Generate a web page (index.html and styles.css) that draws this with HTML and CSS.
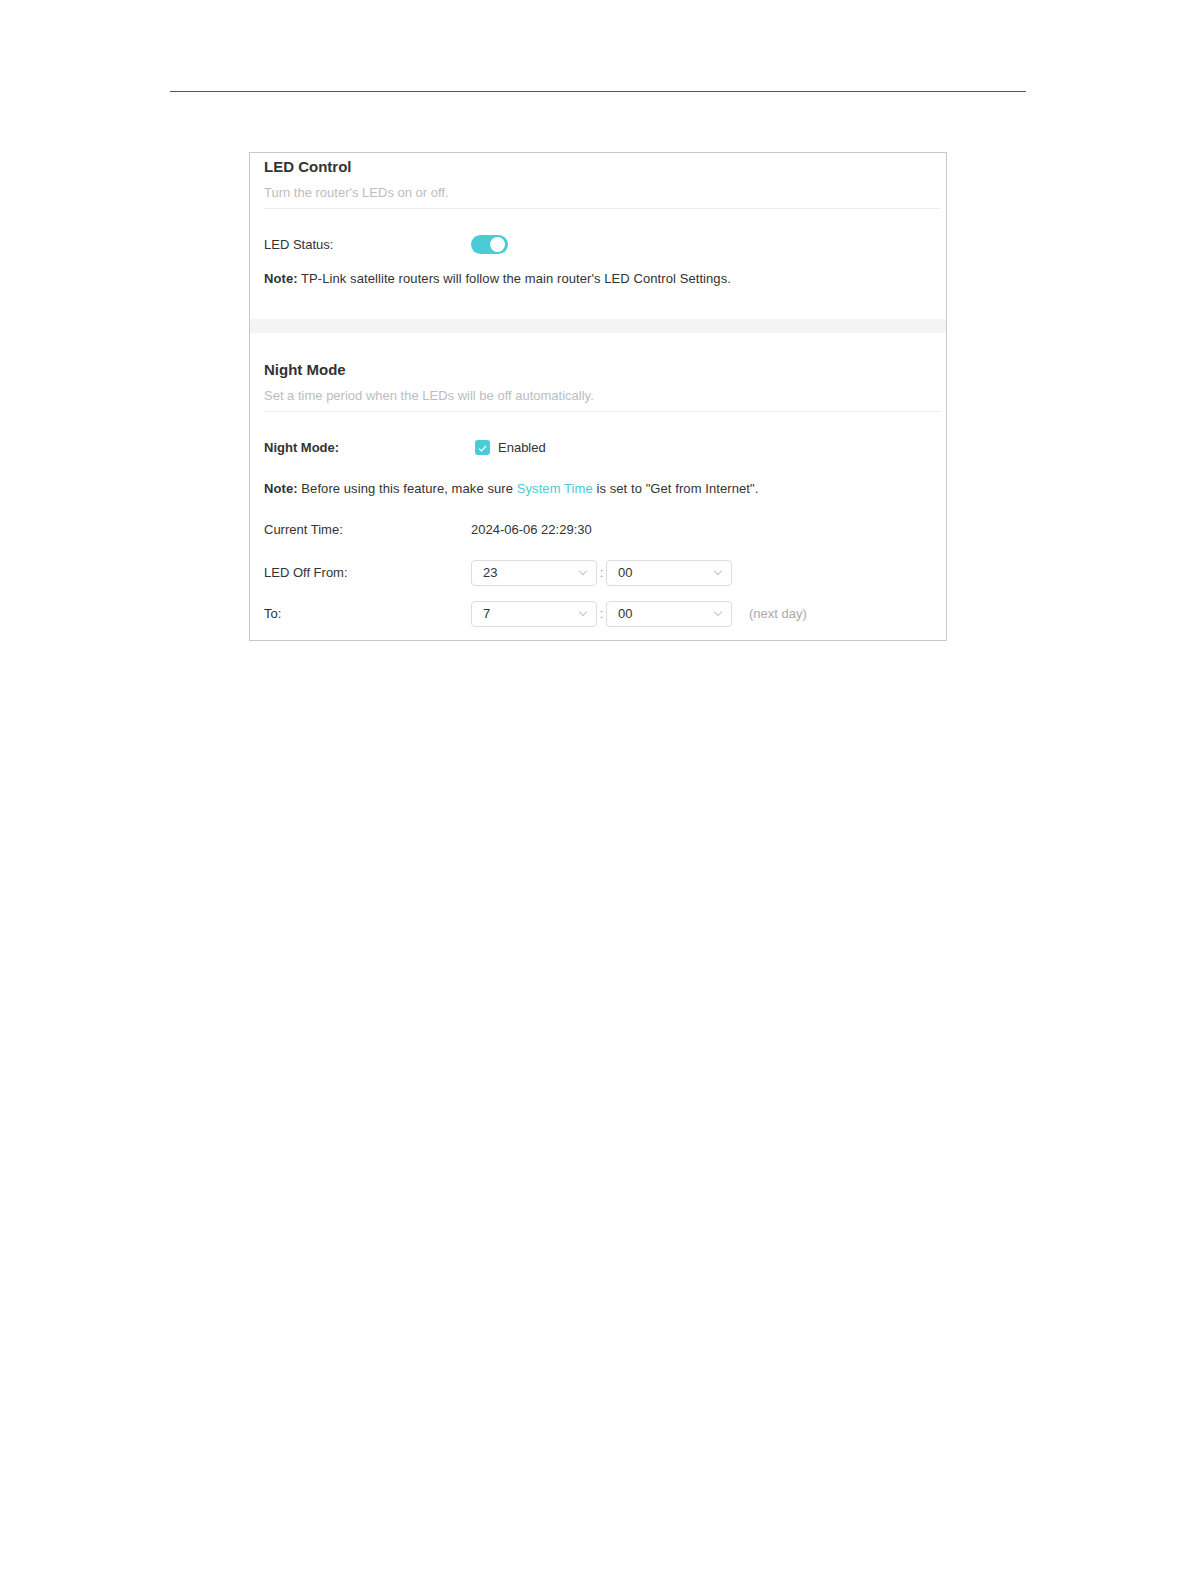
FILE: index.html
```html
<!DOCTYPE html>
<html lang="en">

<head>
    <meta charset="UTF-8">
    <meta name="viewport" content="width=device-width, initial-scale=1.0">
    <title>LED Control</title>

    <link rel="stylesheet" href="styles.css">
</head>

<body>
    <div class="page-rule"></div>

    <div class="panel">
        <!-- LED Control -->
        <div class="section">
            <div class="section-head">
                <h2>LED Control</h2>
                <p>Turn the router's LEDs on or off.</p>
            </div>
            <div class="row short">
                <div class="label">LED Status:</div>
                <div class="value">
                    <span class="toggle on"><span class="knob"></span></span>
                </div>
            </div>
            <div class="row shorter">
                <div class="note"><b>Note:</b> TP-Link satellite routers will follow the main router's LED Control Settings.</div>
            </div>
        </div>

        <div class="band"></div>

        <!-- Night Mode -->
        <div class="section night">
            <div class="section-head">
                <h2>Night Mode</h2>
                <p>Set a time period when the LEDs will be off automatically.</p>
            </div>
            <div class="rows">
                <div class="row">
                    <div class="label bold">Night Mode:</div>
                    <div class="value">
                        <label class="check">
                            <span class="box">
                                <svg width="9" height="7" viewBox="0 0 9 7">
                                    <path d="M1 3.6 L3.5 6 L8 1" fill="none" stroke="#fff" stroke-width="1.2" />
                                </svg>
                            </span>
                            Enabled
                        </label>
                    </div>
                </div>
                <div class="row">
                    <div class="note"><b>Note:</b> Before using this feature, make sure <a href="#">System Time</a> is set to "Get from Internet".</div>
                </div>
                <div class="row">
                    <div class="label">Current Time:</div>
                    <div class="value">2024-06-06 22:29:30</div>
                </div>
                <div class="row select-row">
                    <div class="label">LED Off From:</div>
                    <div class="value">
                        <div class="select"><span>23</span><i class="chev"></i></div>
                        <span class="colon">:</span>
                        <div class="select"><span>00</span><i class="chev"></i></div>
                    </div>
                </div>
                <div class="row">
                    <div class="label">To:</div>
                    <div class="value">
                        <div class="select"><span>7</span><i class="chev"></i></div>
                        <span class="colon">:</span>
                        <div class="select"><span>00</span><i class="chev"></i></div>
                        <span class="hint">(next day)</span>
                    </div>
                </div>
            </div>
        </div>
    </div>
</body>

</html>
```

FILE: styles.css
```css
* {
    margin: 0;
    padding: 0;
    box-sizing: border-box;
}

body {
    font-family: "Liberation Sans", Arial, sans-serif;
    font-size: 13px;
    color: #333;
    background: #fff;
}

.page-rule {
    width: 856px;
    margin: 91px 0 0 170px;
    border-top: 1px solid #555;
}

.panel {
    width: 698px;
    margin: 60px 0 0 249px;
    border: 1px solid #c8c8c8;
}

.section {
    padding: 4px 6px 25px 14px;
}

.section.night {
    padding-top: 27px;
    padding-bottom: 6px;
}

.section-head {
    border-bottom: 1px solid #ececec;
    padding-bottom: 5px;
}

.section-head h2 {
    font-size: 15px;
    font-weight: bold;
    line-height: 20px;
    color: #333;
}

.section-head p {
    margin-top: 6px;
    line-height: 20px;
    color: #bdbdbd;
}

.section .section-head + .row {
    margin-top: 17px;
}

.rows {
    margin-top: 15px;
}

.row {
    display: flex;
    align-items: center;
    height: 41px;
}

.row.short {
    height: 36px;
}

.row.shorter {
    height: 32px;
}

.row.select-row {
    margin-top: 2px;
}

.label {
    width: 207px;
    flex-shrink: 0;
}

.label.bold {
    font-weight: bold;
}

.value {
    display: flex;
    align-items: center;
}

.note {
    letter-spacing: 0.08px;
}

.note b {
    font-weight: bold;
}

.note a {
    color: #4acbd6;
    text-decoration: none;
}

.band {
    height: 14px;
    background: #f4f4f4;
}

/* toggle */
.toggle {
    position: relative;
    display: inline-block;
    width: 37px;
    height: 19px;
    border-radius: 10px;
    background: #4acbd6;
}

.toggle .knob {
    position: absolute;
    top: 2px;
    right: 3px;
    width: 15px;
    height: 15px;
    border-radius: 50%;
    background: #fff;
}

/* checkbox */
.check {
    display: flex;
    align-items: center;
    margin-left: 4px;
}

.check .box {
    display: flex;
    align-items: center;
    justify-content: center;
    width: 15px;
    height: 15px;
    margin-right: 8px;
    border-radius: 3px;
    background: #4acbd6;
}

.check .box svg {
    margin-top: 2px;
}

/* selects */
.select {
    display: flex;
    align-items: center;
    justify-content: space-between;
    width: 126px;
    height: 26px;
    padding: 0 10px 0 11px;
    border: 1px solid #dcdcdc;
    border-radius: 4px;
}

.chev {
    width: 6px;
    height: 6px;
    margin-top: -3px;
    border-right: 1px solid #c4c4c4;
    border-bottom: 1px solid #c4c4c4;
    transform: rotate(45deg);
}

.colon {
    width: 9px;
    text-align: center;
    color: #999;
}

.hint {
    margin-left: 17px;
    color: #aaa;
}
```
